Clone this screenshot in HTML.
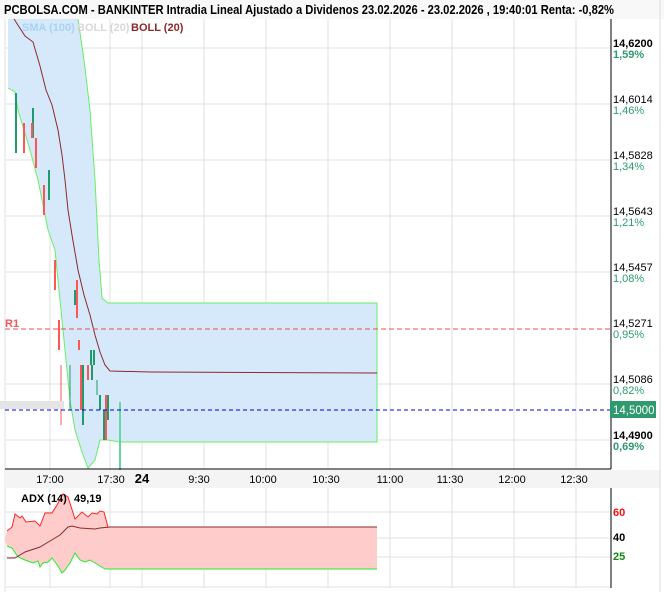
<!DOCTYPE html>
<html><head><meta charset="utf-8"><style>
body{margin:0;background:#fff;width:664px;height:592px;overflow:hidden;font-family:"Liberation Sans",sans-serif}
</style></head><body>
<svg width="664" height="592" xmlns="http://www.w3.org/2000/svg" font-family="Liberation Sans, sans-serif">
<rect x="0" y="0" width="664" height="592" fill="#fff"/>
<rect x="0" y="0" width="664" height="19" fill="#f8f8f8"/>
<text x="4" y="14" font-size="12.5" font-weight="bold" fill="#000" textLength="610" lengthAdjust="spacingAndGlyphs">PCBOLSA.COM - BANKINTER Intradia Lineal Ajustado a Dividenos 23.02.2026 - 23.02.2026 , 19:40:01 Renta: -0,82%</text>
<g stroke="#e2e2e2" stroke-width="1">
<line x1="5" y1="48" x2="611" y2="48"/><line x1="5" y1="104" x2="611" y2="104"/><line x1="5" y1="160" x2="611" y2="160"/><line x1="5" y1="216" x2="611" y2="216"/><line x1="5" y1="272" x2="611" y2="272"/><line x1="5" y1="384" x2="611" y2="384"/><line x1="5" y1="440" x2="611" y2="440"/>
<line x1="50" y1="19" x2="50" y2="469"/><line x1="110" y1="19" x2="110" y2="469"/><line x1="142" y1="19" x2="142" y2="469"/><line x1="204" y1="19" x2="204" y2="469"/><line x1="266" y1="19" x2="266" y2="469"/><line x1="328" y1="19" x2="328" y2="469"/><line x1="390" y1="19" x2="390" y2="469"/><line x1="452" y1="19" x2="452" y2="469"/><line x1="514" y1="19" x2="514" y2="469"/><line x1="576" y1="19" x2="576" y2="469"/>
<line x1="5" y1="19" x2="5" y2="592"/>
</g>
<path d="M8,19 L78,19 L84,60 L90,110 L95,180 L99,260 L102,298 L108,303 L377,303 L377,442 L120,442 L108,440 L100,440 L95,460 L88,468 L82,452 L75,430 L70,400 L65,350 L60,300 L55,250 L48,230 L38,180 L30,150 L18,110 L15,92 L8,88 Z" fill="#d6e9fb"/>
<path d="M78,19 L84,60 L90,110 L95,180 L99,260 L102,298 L108,303 L377,303 L377,442 L120,442 L108,440 L100,440 L95,460 L88,468 L82,452 L75,430 L70,400 L65,350 L60,300 L55,250 L48,230 L38,180 L30,150 L18,110 L15,92 L8,88" fill="none" stroke="#66ee66" stroke-width="1"/>
<path d="M14,19 L25,36 L33,42 L40,66 L46,90 L52,105 L58,130 L62,155 L65,180 L68,210 L72,235 L78,270 L84,295 L90,315 L95,335 L100,352 L105,365 L110,371 L150,372 L377,373" fill="none" stroke="#8b2a2a" stroke-width="1"/>
<g stroke-width="2">
<line x1="16" y1="93" x2="16" y2="153" stroke="#1f9a6a"/>
<line x1="24" y1="123" x2="24" y2="153" stroke="#f55"/>
<line x1="33" y1="108" x2="33" y2="138" stroke="#1f9a6a"/>
<line x1="32" y1="123" x2="32" y2="138" stroke="#f55"/>
<line x1="36" y1="138" x2="36" y2="168" stroke="#f55"/>
<line x1="44" y1="185" x2="44" y2="215" stroke="#f55"/>
<line x1="49" y1="170" x2="49" y2="200" stroke="#1f9a6a"/>
<line x1="55" y1="260" x2="55" y2="290" stroke="#f55"/>
<line x1="59" y1="320" x2="59" y2="350" stroke="#f55"/>
<line x1="61" y1="365" x2="61" y2="425" stroke="#f55" stroke-width="1"/>
<line x1="70" y1="365" x2="70" y2="410" stroke="#1f9a6a" stroke-width="1"/>
<line x1="75" y1="290" x2="75" y2="305" stroke="#1f9a6a"/>
<line x1="77" y1="280" x2="77" y2="318" stroke="#f55"/>
<line x1="79" y1="340" x2="79" y2="350" stroke="#f55"/>
<line x1="81" y1="365" x2="81" y2="410" stroke="#f55"/>
<line x1="83" y1="365" x2="83" y2="425" stroke="#1f9a6a"/>
<line x1="88" y1="365" x2="88" y2="380" stroke="#f55"/>
<line x1="91" y1="350" x2="91" y2="365" stroke="#1f9a6a"/>
<line x1="92" y1="365" x2="92" y2="380" stroke="#1f9a6a"/>
<line x1="94" y1="350" x2="94" y2="365" stroke="#1f9a6a"/>
<line x1="97" y1="380" x2="97" y2="395" stroke="#1f9a6a" stroke-width="1"/>
<line x1="100" y1="395" x2="100" y2="410" stroke="#1f9a6a"/>
<line x1="104" y1="410" x2="104" y2="440" stroke="#1f9a6a"/>
<line x1="106" y1="395" x2="106" y2="440" stroke="#f55"/>
<line x1="108" y1="395" x2="108" y2="420" stroke="#1f9a6a"/>
<line x1="120" y1="402" x2="120" y2="470" stroke="#66d6a0"/>
</g>
<rect x="0" y="401" width="64" height="8" fill="#e4e4e4"/>
<line x1="5" y1="329" x2="611" y2="329" stroke="#f0504a" stroke-dasharray="5,3"/>
<line x1="5" y1="410" x2="611" y2="410" stroke="#0000ee" stroke-dasharray="4,3"/>
<text x="5" y="327" font-size="11" font-weight="bold" fill="#f05a5a">R1</text>
<text x="22" y="31" font-size="11" font-weight="bold" fill="#a8d2f5">SMA (100)</text>
<text x="77" y="31" font-size="11" font-weight="bold" fill="#d8d8d8">BOLL (20)</text>
<text x="131" y="31" font-size="11" font-weight="bold" fill="#8b2a2a">BOLL (20)</text>
<line x1="611" y1="19" x2="611" y2="469" stroke="#000"/>
<line x1="5" y1="469" x2="611" y2="469" stroke="#000"/>
<g font-size="11" fill="#000">
<text x="613" y="47" font-weight="bold">14,6200</text><text x="613" y="58" fill="#2e9a6e" font-weight="bold">1,59%</text>
<text x="613" y="103">14,6014</text><text x="613" y="114" fill="#2e9a6e">1,46%</text>
<text x="613" y="159">14,5828</text><text x="613" y="170" fill="#2e9a6e">1,34%</text>
<text x="613" y="215">14,5643</text><text x="613" y="226" fill="#2e9a6e">1,21%</text>
<text x="613" y="271">14,5457</text><text x="613" y="282" fill="#2e9a6e">1,08%</text>
<text x="613" y="327">14,5271</text><text x="613" y="338" fill="#2e9a6e">0,95%</text>
<text x="613" y="383">14,5086</text><text x="613" y="394" fill="#2e9a6e">0,82%</text>
<text x="613" y="439" font-weight="bold">14,4900</text><text x="613" y="450" fill="#2e9a6e" font-weight="bold">0,69%</text>
</g>
<rect x="610" y="401" width="46" height="17" fill="#2e9a6e"/>
<text x="613" y="414" font-size="11.5" fill="#fff">14,5000</text>
<rect x="5" y="470" width="655" height="18" fill="#f4f4f4"/>
<g font-size="11" fill="#000" text-anchor="middle">
<text x="50" y="483">17:00</text><text x="111" y="483">17:30</text><text x="142" y="483" font-weight="bold" font-size="13">24</text>
<text x="199" y="483">9:30</text><text x="263" y="483">10:00</text><text x="326" y="483">10:30</text><text x="390" y="483">11:00</text><text x="450" y="483">11:30</text><text x="512" y="483">12:00</text><text x="574" y="483">12:30</text>
</g>
<g stroke="#e2e2e2">
<line x1="5" y1="512" x2="611" y2="512"/><line x1="5" y1="538" x2="611" y2="538"/><line x1="5" y1="557" x2="611" y2="557"/><line x1="5" y1="587" x2="611" y2="587"/>
<line x1="50" y1="488" x2="50" y2="588"/><line x1="110" y1="488" x2="110" y2="588"/><line x1="142" y1="488" x2="142" y2="588"/><line x1="204" y1="488" x2="204" y2="588"/><line x1="266" y1="488" x2="266" y2="588"/><line x1="328" y1="488" x2="328" y2="588"/><line x1="390" y1="488" x2="390" y2="588"/><line x1="452" y1="488" x2="452" y2="588"/><line x1="514" y1="488" x2="514" y2="588"/><line x1="576" y1="488" x2="576" y2="588"/>
</g>
<line x1="611" y1="488" x2="611" y2="588" stroke="#000"/>
<path d="M7,531 L12,527 L15,514 L20,518 L22,516 L26,522 L35,521 L40,526 L45,513 L52,513 L57,505 L63,494 L68,497 L75,519 L82,512 L88,517 L92,513 L97,514 L100,511 L104,512 L108,527 L377,527 L377,569 L110,569 L105,569 L95,563 L90,560 L85,562 L80,560 L75,553 L70,563 L65,570 L62,573 L58,566 L52,558 L48,562 L43,563 L40,567 L38,561 L33,563 L25,560 L18,557 L12,548 L7,546 L5,540 Z" fill="#ffcccc"/>
<path d="M7,531 L12,527 L15,514 L20,518 L22,516 L26,522 L35,521 L40,526 L45,513 L52,513 L57,505 L63,494 L68,497 L75,519 L82,512 L88,517 L92,513 L97,514 L100,511 L104,512 L108,527" fill="none" stroke="#ff2222"/>
<path d="M7,546 L12,548 L18,557 L25,560 L33,563 L38,561 L40,567 L43,563 L48,562 L52,558 L58,566 L62,573 L65,570 L70,563 L75,553 L80,560 L85,562 L90,560 L95,563 L105,569 L377,569" fill="none" stroke="#22ee22"/>
<path d="M7,558 L15,558 L25,552 L40,547 L50,541 L60,535 L68,527 L72,526 L80,528 L95,529 L100,528 L110,527 L377,527" fill="none" stroke="#8b2a2a"/>
<text x="21" y="502" font-size="11" font-weight="bold">ADX (14)</text>
<text x="74" y="502" font-size="11" font-weight="bold">49,19</text>
<text x="613" y="516" font-size="11" font-weight="bold" fill="#ee1111">60</text>
<text x="613" y="541" font-size="11" font-weight="bold" fill="#000">40</text>
<text x="613" y="560" font-size="11" font-weight="bold" fill="#118811">25</text>
<line x1="660" y1="0" x2="660" y2="592" stroke="#ddd"/>
</svg>
</body></html>
